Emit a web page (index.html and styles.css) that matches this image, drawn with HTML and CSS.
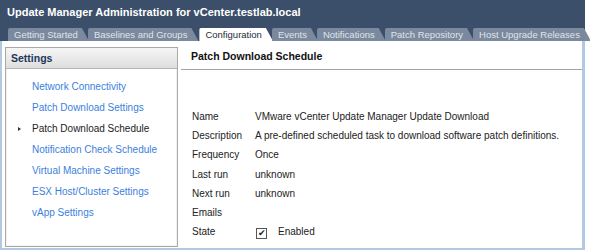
FILE: index.html
```html
<!DOCTYPE html>
<html lang="en">
<head>
  <meta charset="UTF-8" />
  <title>Update Manager Administration</title>
  <link rel="stylesheet" href="styles.css">
</head>
<body>
  <div class="window">
    <header class="titlebar">
      <h1>Update Manager Administration for vCenter.testlab.local</h1>
      <nav class="tabs">
        <span class="tab">Getting Started</span>
        <span class="tab">Baselines and Groups</span>
        <span class="tab active">Configuration</span>
        <span class="tab">Events</span>
        <span class="tab">Notifications</span>
        <span class="tab">Patch Repository</span>
        <span class="tab">Host Upgrade Releases</span>
      </nav>
    </header>
    <main class="body">
      <aside class="sidebar">
        <div class="sidebar-head">Settings</div>
        <ul class="menu">
          <li><a>Network Connectivity</a></li>
          <li><a>Patch Download Settings</a></li>
          <li class="current"><a>Patch Download Schedule</a></li>
          <li><a>Notification Check Schedule</a></li>
          <li><a>Virtual Machine Settings</a></li>
          <li><a>ESX Host/Cluster Settings</a></li>
          <li><a>vApp Settings</a></li>
        </ul>
      </aside>
      <section class="content">
        <h2>Patch Download Schedule</h2>
        <table class="props">
          <tr><td>Name</td><td>VMware vCenter Update Manager Update Download</td></tr>
          <tr><td>Description</td><td>A pre-defined scheduled task to download software patch definitions.</td></tr>
          <tr><td>Frequency</td><td>Once</td></tr>
          <tr><td>Last run</td><td>unknown</td></tr>
          <tr><td>Next run</td><td>unknown</td></tr>
          <tr><td>Emails</td><td></td></tr>
          <tr><td>State</td><td><span class="check">&#10004;</span><span class="enabled">Enabled</span></td></tr>
        </table>
      </section>
    </main>
  </div>
</body>
</html>
```

FILE: styles.css
```css
body {
  margin: 0;
  font-family: 'Liberation Sans', Arial, sans-serif;
  font-size: 10px;
  color: #222;
  background: #fff;
}

.window {
  width: 585px;
  height: 250px;
  box-sizing: border-box;
  border-left: 2px solid #b3c9e3;
  border-right: 3px solid #b3c9e3;
  border-bottom: 2px solid #b3c9e3;
  display: flex;
  flex-direction: column;
}

.titlebar {
  background: #3b4f6a;
  margin: 0 -3px 0 -2px;
  padding: 5px 0 0 7px;
  height: 41px;
  box-sizing: border-box;
}

h1 {
  margin: 0;
  color: #fff;
  font-size: 11px;
  font-weight: bold;
  height: 17px;
  line-height: 14px;
}

.tabs {
  display: flex;
  margin-top: 6px;
  padding-left: 1px;
}

.tab {
  height: 13px;
  line-height: 13px;
  padding: 0 11px 0 6px;
  margin-right: -1px;
  background: #7b899e;
  color: #dfe4eb;
  font-size: 9.5px;
  white-space: nowrap;
  clip-path: polygon(0 0, calc(100% - 7px) 0, 100% 100%, 0 100%);
  border-top-left-radius: 2px;
}

.tab.active {
  background: #fff;
  color: #1d2b3c;
  margin-left: 2px;
}

.body {
  flex: 1;
  display: flex;
  min-height: 0;
}

.sidebar {
  width: 173px;
  box-sizing: border-box;
  margin: 6px 3px 1px 3px;
  border: 1px solid #a9a9a9;
  box-shadow: inset 0 0 0 1px #f2f2f2;
}

.sidebar-head {
  height: 20px;
  line-height: 21px;
  padding-left: 5px;
  font-weight: bold;
  font-size: 10.5px;
  color: #20385a;
  background: linear-gradient(#f6f6f6, #dedede);
  border-bottom: 1px solid #b5b5b5;
}

.menu {
  list-style: none;
  margin: 0;
  padding: 8px 0 0 26px;
}

.menu li {
  height: 21px;
  line-height: 20px;
  position: relative;
}

.menu a {
  color: #3b7fdc;
}

.menu li.current a {
  color: #222;
}

.menu li.current::before {
  content: "";
  position: absolute;
  left: -14px;
  top: 8px;
  border-left: 3px solid #333;
  border-top: 2px solid transparent;
  border-bottom: 2px solid transparent;
}

.content {
  flex: 1;
  padding-top: 8px;
}

h2 {
  margin: 0;
  padding: 0 0 6px 10px;
  font-size: 10.5px;
  font-weight: bold;
  color: #111;
  border-bottom: 1px solid #a4a4a4;
  line-height: 14px;
}

.props {
  margin: 37px 0 0 8px;
  border-collapse: collapse;
}

.props td {
  padding: 0;
  height: 19.2px;
  line-height: 19px;
  white-space: nowrap;
}

.props td:first-child {
  width: 63px;
  padding-left: 3px;
}

.check {
  display: inline-block;
  width: 9px;
  height: 9px;
  border: 1px solid #555;
  font-size: 9px;
  line-height: 9px;
  text-align: center;
  vertical-align: -1px;
  color: #222;
  margin-left: 1px;
}

.enabled {
  margin-left: 11px;
}
```
